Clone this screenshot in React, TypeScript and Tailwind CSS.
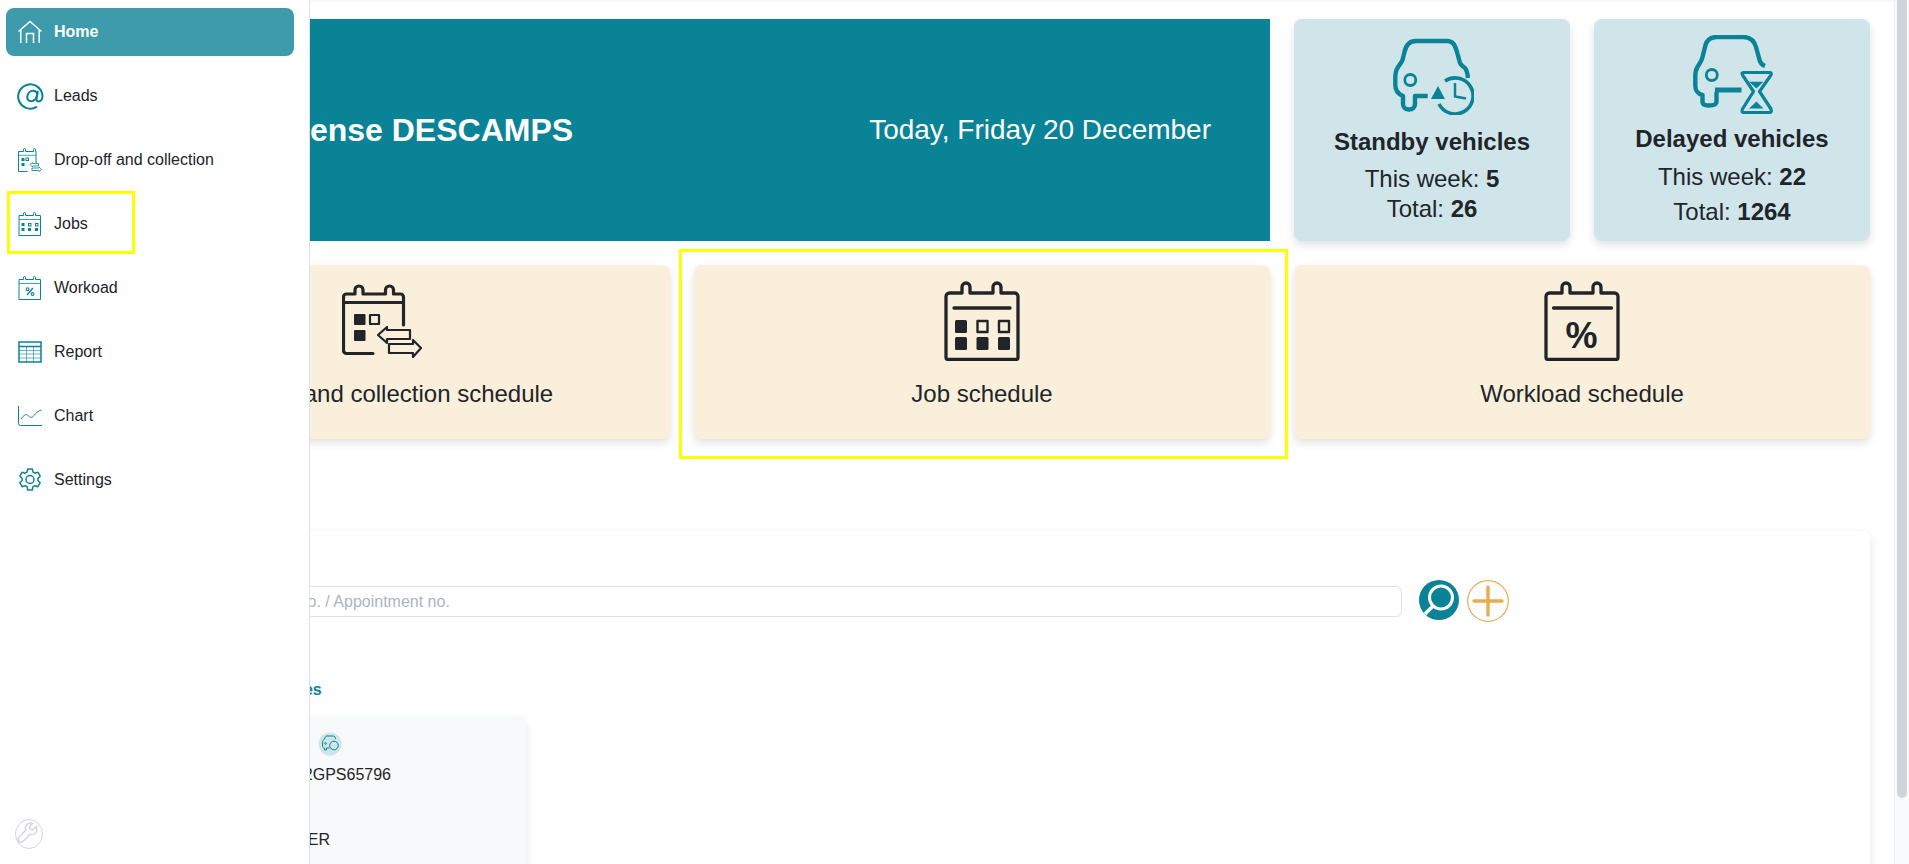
import React from "react";

const TEAL = "#0a8396";

function NavHome() {
  return (
    <svg width="24" height="24" viewBox="0 0 24 24" fill="none" stroke="#fff" strokeWidth="1.500">
      <path d="M0.500 11.500 12 1.500l11.500 10" />
      <path d="M2.800 10v13M21.200 10v13" />
      <path d="M8.500 23V13.500h7V23" />
    </svg>
  );
}
function NavAt() {
  return (
    <svg width="26" height="26" viewBox="0 0 24 24" fill="none" stroke={TEAL} strokeWidth="1.900" className="overflow-visible">
      <path d="M18.500 21.800a11.200 11.200 0 1 1 5-9.800c0 3-1.600 5-3.600 5-1.500 0-2.200-1-1.900-2.600l1.300-7" />
      <path d="M18.600 11c-.6 3.400-2.800 5.800-5.600 5.800-2.400 0-3.800-1.800-3.500-4.200C9.900 9.500 12.200 7.200 14.800 7.200c2.300 0 4.200 1.600 3.800 3.800z" />
    </svg>
  );
}
function NavCalBase({ children }: { children: React.ReactNode }) {
  return (
    <svg width="24" height="24" viewBox="0 0 24 24" fill="none" stroke={TEAL} strokeWidth="1">
      <path d="M1 3.500h4.500V1.500a1 1 0 0 1 2 0v2h8v-2a1 1 0 0 1 2 0v2H22.500v20H1z" />
      <path d="M1 7.500h21.500" opacity=".75" />
      {children}
    </svg>
  );
}
function NavDrop() {
  return (
    <svg width="24" height="24" viewBox="0 0 24 24" fill="none" stroke={TEAL} strokeWidth="1">
      <path d="M18 15V3.500h-.5v-2a1 1 0 0 0-2 0v2h-8v-2a1 1 0 0 0-2 0v2H.5v20h9" />
      <path d="M.5 7.300h17.500" opacity=".75" />
      <rect x="3.500" y="10" width="3" height="3" fill={TEAL} stroke="none" />
      <rect x="3.500" y="15" width="3" height="3" fill={TEAL} stroke="none" />
      <rect x="8" y="10" width="2.500" height="2.500" />
      <path d="M12 16.500l2.500-2v1h6v2.500h-6v1zM23.500 21.500l-2.500 2v-1h-7v-2.500h7v-1z" opacity=".8" />
    </svg>
  );
}
function NavJobs() {
  return (
    <NavCalBase>
      <g fill={TEAL} stroke="none">
        <rect x="3.500" y="11" width="3" height="3" />
        <rect x="3.500" y="16" width="3" height="3" />
        <rect x="10" y="16" width="3" height="3" />
        <rect x="17" y="16" width="3" height="3" />
      </g>
      <rect x="10.500" y="11.500" width="2.500" height="2.500" />
      <rect x="17.500" y="11.500" width="2.500" height="2.500" />
    </NavCalBase>
  );
}
function NavWork() {
  return (
    <NavCalBase>
      <path d="M9 19 15 12" strokeWidth="1.300" />
      <circle cx="9.500" cy="13.200" r="1.400" strokeWidth="1.100" />
      <circle cx="14.500" cy="18" r="1.400" strokeWidth="1.100" />
    </NavCalBase>
  );
}
function NavReport() {
  return (
    <svg width="24" height="22" viewBox="0 0 24 22" fill="none" stroke={TEAL}>
      <rect x="1" y="1" width="22" height="20" strokeWidth="1.500" />
      <path d="M1 5.500h22" strokeWidth="1.500" />
      <path d="M1 9.500h22M1 13h22M1 17h22M8.500 5.500V21M15.500 5.500V21" strokeWidth=".8" opacity=".75" />
    </svg>
  );
}
function NavChart() {
  return (
    <svg width="24" height="20" viewBox="0 0 24 20" fill="none" stroke={TEAL} strokeWidth="1">
      <path d="M.5 0v17.500a2 2 0 0 0 2 2H24" />
      <path d="M3 13c3-4 5-5.500 7-3.500s3.500 3 6 0 4.500-5 7.500-5.500" />
    </svg>
  );
}
function NavGear() {
  return (
    <svg width="24" height="24" viewBox="0 0 24 24" fill="none" stroke={TEAL} strokeWidth="1.500" strokeLinejoin="round">
      <path d="M9.700 1h4.600l.7 3.200 1.900 1 3-1 2.300 4-2.300 2.100v2.200l2.300 2.200-2.300 4-3-1-1.900 1-.7 3.300H9.700L9 18.700l-1.900-1-3 1-2.300-4L4.100 12.500v-2.200L1.800 8.200l2.300-4 3 1 1.900-1z" />
      <circle cx="12" cy="11.500" r="4" />
    </svg>
  );
}

function StandbyIcon() {
  return (
    <svg width="81" height="78" viewBox="0 0 81 78" fill="none" stroke={TEAL} strokeWidth="4.400" strokeLinejoin="round">
      <path d="M75 41c-.5-5-1.500-8-3-10-3-2-4-3-5-5l-3-11c-2-7-4-11-10-11H23C16 4 13 8 11.500 15L9.500 23C8 27 6 28 4.500 31 2.500 34 2.300 37 2.300 41v7c0 5 2.700 9 7.700 11v8c0 3.500 2.500 5.500 6 5.500s6-2 6-5.500v-8h12.700" />
      <circle cx="17.300" cy="43" r="5.500" strokeWidth="2.800" />
      <path d="M52 44A18 18 0 1 1 46 67" strokeWidth="3.600" />
      <path d="M38 62 45 49l7 13z" fill={TEAL} stroke="none" />
      <path d="M62 46v13.500l11 2" strokeWidth="2.500" />
    </svg>
  );
}
function DelayedIcon() {
  return (
    <svg width="81" height="80" viewBox="0 0 81 80" fill="none" stroke={TEAL} strokeWidth="4.400" strokeLinejoin="round">
      <path d="M72 31c-3-1-5-3-6-8l-3-11C61 5 57 2 50 2H24C17 2 14 5 12.500 10L9.500 22C8.500 27 6 29 4.500 32 2.500 35 2.300 38 2.300 41v10c0 4 2.700 8 7.200 9v7c0 2.500 2 3.500 6 3.500 4.500 0 8-1 8-3.500V57" />
      <path d="M22 55h26.500" strokeWidth="5" />
      <circle cx="18.800" cy="40" r="5.500" strokeWidth="2.800" />
      <path d="M51 37.500H76.500Q79 37.500 78 40L66.500 56.500 78 74Q79 77.500 76.500 77.500H51Q48 77.500 49.500 74L60.500 56.500 49.500 40Q48 37.500 51 37.500Z" strokeWidth="3.200" />
      <path d="M56 46.700h14.500L63.400 53.500zM56 73.500 63.400 66.500l7.100 7z" fill={TEAL} stroke="none" />
    </svg>
  );
}
function DropCal() {
  return (
    <svg width="80" height="74" viewBox="0 0 80 74" fill="none" stroke="#212529" strokeWidth="3.200" strokeLinejoin="round">
      <path d="M61.500 41V13a3 3 0 0 0-3-3H51.500V6a4 4 0 0 0-8 0v4H21V6a4 4 0 0 0-8 0v4H4.500a3 3 0 0 0-3 3v53.500a3 3 0 0 0 3 3H31" strokeLinecap="round" />
      <path d="M2 18.500h60" />
      <rect x="12" y="30" width="11.500" height="11" rx="1" fill="#212529" stroke="none" />
      <rect x="12" y="46" width="11.500" height="11" rx="1" fill="#212529" stroke="none" />
      <rect x="28" y="31" width="9" height="9" strokeWidth="2.200" />
      <path d="M36 51l9-8v3h23v9H45v4z" strokeWidth="2.200" />
      <path d="M47 60v9H71v4l8-9-8-8v4z" strokeWidth="2.200" />
    </svg>
  );
}
function JobCal() {
  return (
    <svg width="76" height="80" viewBox="0 0 76 80" fill="none" stroke="#212529" strokeWidth="3.300" strokeLinejoin="round">
      <path d="M18 12V6a4 4 0 0 1 8 0v6H49V6a4 4 0 0 1 8 0v6h13.500a3.500 3.500 0 0 1 3.500 3.500v61a2 2 0 0 1-2 2H4a2 2 0 0 1-2-2v-61A3.500 3.500 0 0 1 5.500 12z" />
      <path d="M10 27h56" strokeLinecap="round" />
      <g fill="#212529" stroke="none">
        <rect x="11" y="39" width="12" height="13" rx="1.500" />
        <rect x="11" y="56" width="12" height="13" rx="1.500" />
        <rect x="32.500" y="56" width="12" height="13" rx="1.500" />
        <rect x="54" y="56" width="12" height="13" rx="1.500" />
      </g>
      <rect x="33.500" y="40" width="10" height="11" strokeWidth="2.400" />
      <rect x="55" y="40" width="10" height="11" strokeWidth="2.400" />
    </svg>
  );
}
function WorkCal() {
  return (
    <svg width="76" height="80" viewBox="0 0 76 80" fill="none" stroke="#212529" strokeWidth="3.300" strokeLinejoin="round">
      <path d="M18 12V6a4 4 0 0 1 8 0v6H49V6a4 4 0 0 1 8 0v6h13.500a3.500 3.500 0 0 1 3.500 3.500v61a2 2 0 0 1-2 2H4a2 2 0 0 1-2-2v-61A3.500 3.500 0 0 1 5.500 12z" />
      <path d="M9.500 27h58" strokeLinecap="round" />
      <text x="37.500" y="67" textAnchor="middle" fill="#212529" stroke="none" fontSize="36" fontWeight="700" fontFamily="Liberation Sans">%</text>
    </svg>
  );
}
function SearchBtn() {
  return (
    <svg width="40" height="40" viewBox="0 0 40 40">
      <circle cx="20" cy="20" r="20" fill={TEAL} />
      <circle cx="22" cy="17.500" r="11.500" fill="none" stroke="#fff" strokeWidth="3" />
      <path d="M14 26 6 34" stroke="#fff" strokeWidth="3.500" />
    </svg>
  );
}
function PlusBtn() {
  return (
    <svg width="42" height="42" viewBox="0 0 42 42" fill="none" stroke="#e8ac50">
      <circle cx="21" cy="21" r="20.300" strokeWidth="1.200" />
      <path d="M7 21h28M21 7v28" strokeWidth="3.400" strokeLinecap="round" />
    </svg>
  );
}
function Wrench() {
  return (
    <svg width="30" height="30" viewBox="0 0 28 30" fill="none" stroke="#d1d5db" strokeWidth="1">
      <ellipse cx="14" cy="15" rx="13.500" ry="14.500" />
      <path d="M21.500 7.500l-3.800 3.400-2.600-.7-.7-2.600 3.300-3.300c-2.500-.8-5.200 0-6.400 2-1 1.500-1 3.300-.4 4.800l-6.800 7c-1.300 1.500-1.200 3.300 0 4.400 1.200 1.100 3 1 4.200-.2l6.700-7c1.700.6 3.500.4 5-.8 1.600-1.400 2.200-4 1.500-6z" strokeWidth="1.400" />
    </svg>
  );
}
function MiniVehicle() {
  return (
    <svg width="24" height="24" viewBox="0 0 23 24" fill="none" stroke={TEAL} strokeWidth="1">
      <circle cx="11.500" cy="12" r="11.500" fill="#cfe5ea" stroke="none" />
      <path d="M17 7c0-2-1-3-3-3H8.500C7 4 6.500 5 6 7c-1 1-2 2-2 4v3c0 1 1 2 2 2v2h2v-2h3" />
      <circle cx="15.500" cy="13.500" r="4.300" />
      <circle cx="7" cy="11.500" r=".8" />
    </svg>
  );
}

const nav: [string, React.ReactNode][] = [
  ["Leads", <NavAt />],
  ["Drop-off and collection", <NavDrop />],
  ["Jobs", <NavJobs />],
  ["Workoad", <NavWork />],
  ["Report", <NavReport />],
  ["Chart", <NavChart />],
  ["Settings", <NavGear />],
];

export default function App() {
  return (
    <div className="relative h-[864px] w-[1909px] overflow-hidden bg-white font-['Liberation_Sans',Arial,sans-serif]">
      <div className="flex h-full">
        {/* page content, running beneath the slide-over menu */}
        <main className="min-w-0 flex-1 border-t-2 border-[#f7f7f7] pl-[94px] pr-[24px] pt-[17px]">
          <div className="grid grid-cols-3 gap-[24px]">
            <div className="col-span-2 flex h-[222px] items-center justify-between bg-[#0a8396] pl-[63px] pr-[59px] text-white">
              <span className="-mt-[1px] text-[32px] font-bold leading-none">Hello Hortense DESCAMPS</span>
              <span className="text-[28px] leading-none">Today, Friday 20 December</span>
            </div>
            <div className="grid grid-cols-2 gap-x-[24px]">
              <div className="flex flex-col items-center rounded-lg bg-[#cfe5ea] pt-[18px] text-[24px] text-[#212529] shadow-[0_4px_8px_rgba(0,0,0,0.12)]">
                <div className="h-[76px] pl-[3px]"><StandbyIcon /></div>
                <div className="mt-[15px] font-bold leading-[28px]">Standby vehicles</div>
                <div className="mt-[8px] leading-[30px]">This week: <b>5</b></div>
                <div className="leading-[30px]">Total: <b>26</b></div>
              </div>
              <div className="flex flex-col items-center rounded-lg bg-[#cfe5ea] pt-[16px] text-[24px] text-[#212529] shadow-[0_4px_8px_rgba(0,0,0,0.12)]">
                <div className="h-[80px] pl-[3px]"><DelayedIcon /></div>
                <div className="mt-[10px] font-bold leading-[28px]">Delayed vehicles</div>
                <div className="mt-[8px] leading-[32px]">This week: <b>22</b></div>
                <div className="leading-[38px]">Total: <b>1264</b></div>
              </div>
            </div>

            <div className="flex h-[174px] flex-col items-center rounded-lg bg-[#f9efdb] pt-[19px] text-[#212529] shadow-[0_4px_8px_rgba(0,0,0,0.12)]">
              <div className="h-[79px]"><DropCal /></div>
              <div className="mt-[15px] text-[24px] leading-[32px]">Drop-off and collection schedule</div>
            </div>
            <div className="flex h-[174px] flex-col items-center rounded-lg bg-[#f9efdb] pt-[16px] text-[#212529] shadow-[0_4px_8px_rgba(0,0,0,0.12)]">
              <div className="h-[82px]"><JobCal /></div>
              <div className="mt-[15px] text-[24px] leading-[32px]">Job schedule</div>
            </div>
            <div className="flex h-[174px] flex-col items-center rounded-lg bg-[#f9efdb] pt-[16px] text-[#212529] shadow-[0_4px_8px_rgba(0,0,0,0.12)]">
              <div className="h-[82px]"><WorkCal /></div>
              <div className="mt-[15px] text-[24px] leading-[32px]">Workload schedule</div>
            </div>
          </div>

          <section className="mt-[92px] h-[400px] rounded-lg bg-white px-[24px] pt-[49px] shadow-[0_4px_12px_rgba(0,0,0,0.1)]">
            <div className="flex h-[42px] items-start gap-[17px]">
              <input
                readOnly
                placeholder="Registration no. / Job no. / Appointment no."
                className="mt-[6px] h-[31px] w-[1284px] rounded-md border border-[#dee2e6] bg-white pl-[24px] pr-[12px] text-[16px] placeholder:text-[#adb5bd]"
              />
              <div className="flex items-start gap-[8px]">
                <SearchBtn />
                <PlusBtn />
              </div>
            </div>
            <div className="mt-[56px] pl-[73px] text-[16px] font-bold leading-[24px] text-[#0a8396]">Standby vehicles</div>
            <div className="mt-[14px] h-[200px] w-[408px] rounded-md bg-[#f7f9fa] pt-[16px] text-[16px] leading-[24px] text-[#212529] shadow-[0_4px_8px_rgba(0,0,0,0.1)]">
              <div className="pl-[200px]"><MiniVehicle /></div>
              <div className="mt-[7px] w-[273px] text-right">VF12GPS65796</div>
              <div className="mt-[41px] w-[212px] text-right">RENAULT CLIER</div>
            </div>
          </section>
        </main>

        <div className="h-full w-[15px] shrink-0 border-l border-[#e9ebee] bg-[#f9fafb] px-[2px]">
          <div className="h-[798px] w-[10px] rounded-b-md bg-[#d1d5db]" />
        </div>
      </div>

      {/* slide-over menu */}
      <aside className="absolute inset-y-0 left-0 flex w-[310px] flex-col border-r border-[#e0e2e5] bg-white">
        <div className="pl-[6px] pt-[8px]">
          <div className="flex h-[48px] w-[288px] items-center gap-[12px] rounded-lg bg-[#3e9bac] pl-[12px] text-[16px] font-bold text-white">
            <NavHome />
            <span>Home</span>
          </div>
        </div>
        <div className="mt-[8px] flex flex-col px-[18px]">
          {nav.map(([label, icon]) => (
            <div key={label} className="flex h-[64px] items-center gap-[12px] text-[16px] text-[#212529]">
              <span className="flex w-[24px] justify-center">{icon}</span>
              <span>{label}</span>
            </div>
          ))}
        </div>
        <div className="mt-auto pb-[15px] pl-[14px]">
          <Wrench />
        </div>
      </aside>

      {/* yellow annotation boxes drawn over the screenshot */}
      <div className="absolute left-[7px] top-[191px] h-[63px] w-[128px] border-[3px] border-[#ffff00]" />
      <div className="absolute left-[679px] top-[249px] h-[210px] w-[609px] border-[3px] border-[#ffff00]" />
    </div>
  );
}
